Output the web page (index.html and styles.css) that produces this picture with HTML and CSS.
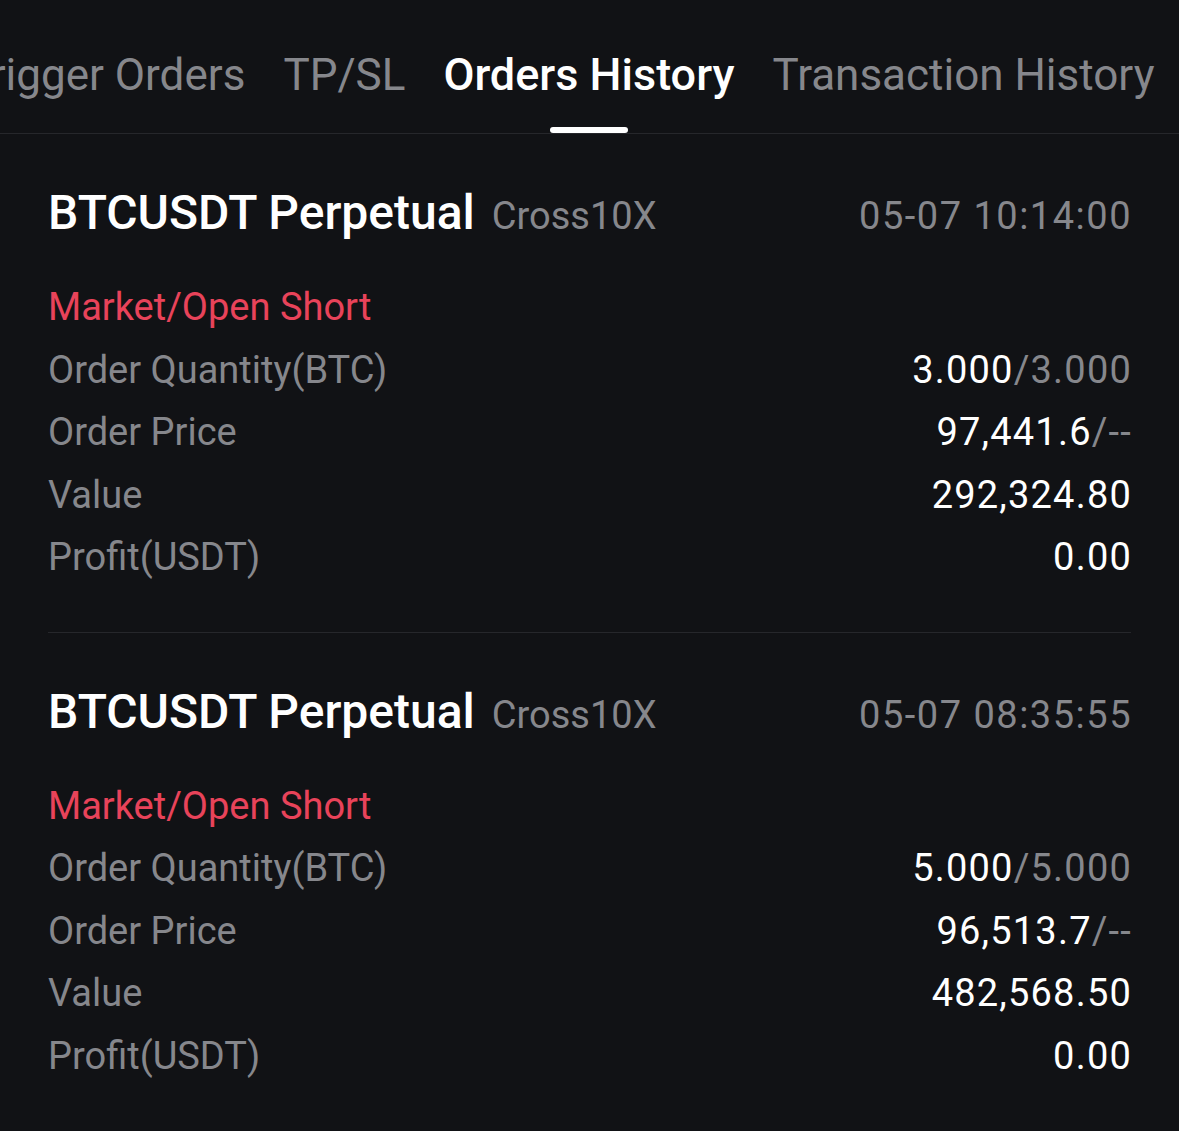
FILE: index.html
```html
<!DOCTYPE html>
<html lang="en">
<head>
<meta charset="utf-8">
<title>Orders History</title>
<link rel="stylesheet" href="styles.css">
</head>
<body>
<div class="page">
  <nav class="tabs">
    <div class="tabs-track">
      <span class="tab">Trigger Orders</span>
      <span class="tab">TP/SL</span>
      <span class="tab active">Orders History</span>
      <span class="tab">Transaction History</span>
    </div>
  </nav>

  <section class="card">
    <div class="card-head">
      <span class="symbol">BTCUSDT Perpetual</span>
      <span class="mode">Cross10X</span>
      <span class="time">05-07 10:14:00</span>
    </div>
    <div class="side">Market/Open Short</div>
    <div class="row"><span class="label">Order Quantity(BTC)</span><span class="val">3.000<span class="dim">/3.000</span></span></div>
    <div class="row"><span class="label">Order Price</span><span class="val">97,441.6<span class="dim">/--</span></span></div>
    <div class="row"><span class="label">Value</span><span class="val">292,324.80</span></div>
    <div class="row"><span class="label">Profit(USDT)</span><span class="val">0.00</span></div>
  </section>

  <section class="card">
    <div class="card-head">
      <span class="symbol">BTCUSDT Perpetual</span>
      <span class="mode">Cross10X</span>
      <span class="time">05-07 08:35:55</span>
    </div>
    <div class="side">Market/Open Short</div>
    <div class="row"><span class="label">Order Quantity(BTC)</span><span class="val">5.000<span class="dim">/5.000</span></span></div>
    <div class="row"><span class="label">Order Price</span><span class="val">96,513.7<span class="dim">/--</span></span></div>
    <div class="row"><span class="label">Value</span><span class="val">482,568.50</span></div>
    <div class="row"><span class="label">Profit(USDT)</span><span class="val">0.00</span></div>
  </section>
</div>
</body>
</html>
```

FILE: styles.css
```css
html, body {
  margin: 0;
  padding: 0;
  background: #111215;
}

body {
  font-family: Roboto, "Noto Sans", sans-serif;
  color: #ffffff;
  width: 1179px;
  height: 1131px;
  overflow: hidden;
}

.tabs {
  height: 133px;
  border-bottom: 1px solid #26272b;
  overflow: hidden;
}

.tabs-track {
  display: flex;
  height: 100%;
  gap: 38px;
  margin-left: -34px;
  white-space: nowrap;
}

.tab {
  position: relative;
  padding-top: 46px;
  font-size: 44px;
  line-height: 58px;
  color: #86878c;
}

.tab.active {
  color: #ffffff;
  font-size: 45px;
  font-weight: 500;
}

.tab.active::after {
  content: "";
  position: absolute;
  left: 50%;
  bottom: 0;
  width: 78px;
  height: 6px;
  margin-left: -39px;
  border-radius: 3px;
  background: #ffffff;
}

.card {
  margin: 0 48px;
  padding: 49px 0 43px;
  border-bottom: 1px solid #26272b;
}

.card:last-child {
  border-bottom: none;
}

.card-head {
  display: flex;
  align-items: baseline;
  height: 60px;
  line-height: 60px;
  margin-bottom: 33px;
}

.symbol {
  font-size: 48px;
  font-weight: 500;
  color: #ffffff;
}

.mode {
  margin-left: 17px;
  font-size: 38px;
  color: #86878c;
}

.time {
  margin-left: auto;
  font-size: 38px;
  letter-spacing: 1.5px;
  margin-right: -1px;
  color: #86878c;
}

.side {
  font-size: 38px;
  line-height: 62.5px;
  color: #e8435a;
}

.row {
  display: flex;
  justify-content: space-between;
  font-size: 38px;
  line-height: 62.5px;
}

.label {
  color: #86878c;
}

.val {
  color: #ffffff;
  letter-spacing: 1.2px;
  margin-right: -1px;
}

.dim {
  color: #86878c;
}
```
